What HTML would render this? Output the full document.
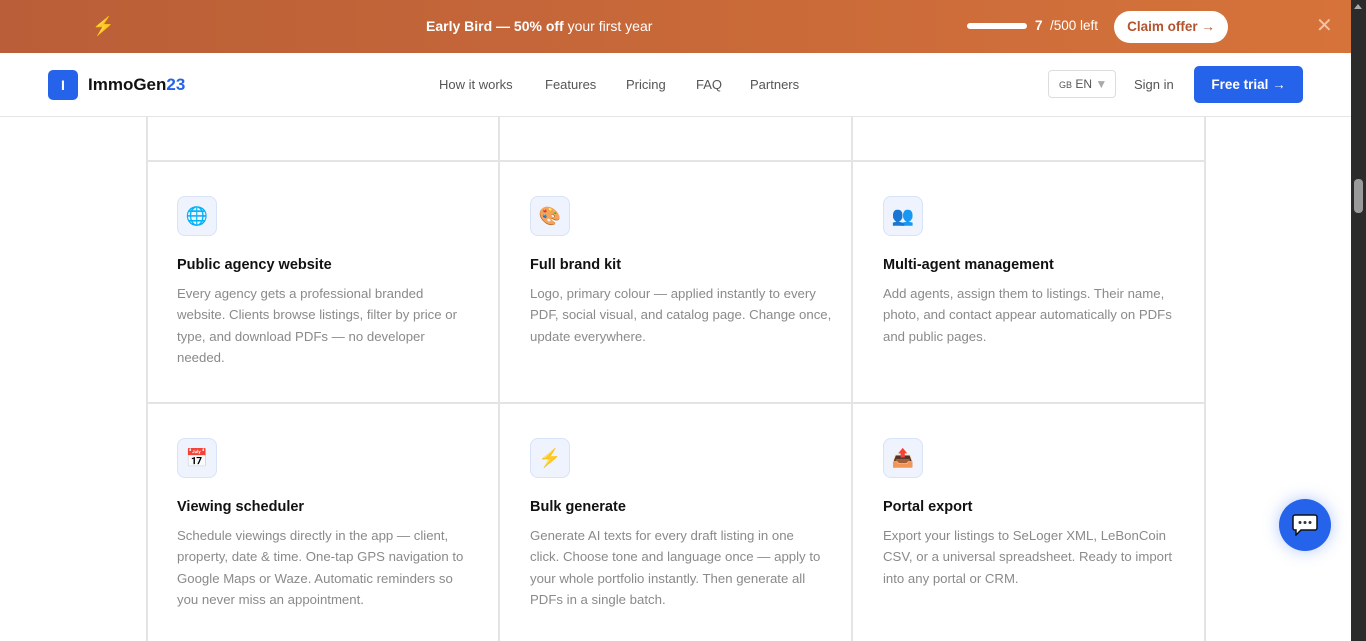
<!DOCTYPE html>
<html><head><meta charset="utf-8"><style>
*{box-sizing:border-box;margin:0;padding:0}
body{width:1366px;height:641px;overflow:hidden;font-family:"Liberation Sans",sans-serif;background:#fff;position:relative}
.banner{position:absolute;left:0;top:0;width:1351px;height:53px;background:linear-gradient(90deg,#b95e38,#d6733a);color:#fff}
.nav{position:absolute;left:0;top:53px;width:1351px;height:64px;background:#fff;border-bottom:1px solid #e6e6e6;z-index:2}
.sb{position:absolute;left:1351px;top:0;width:15px;height:641px;background:#2b2b2b}
.thumb{position:absolute;left:1354px;top:179px;width:9px;height:34px;background:#9a9a9a;border-radius:4px}
.vl{position:absolute;width:2px;background:#e4e4e4;top:117px;height:524px}
.hl{position:absolute;height:2px;background:#e4e4e4;left:147px;width:1059px}
.cell{position:absolute;width:320px}
.ic{width:40px;height:40px;border:1px solid #d9e3f7;background:#eef3fe;border-radius:8px;display:flex;align-items:center;justify-content:center;font-size:18px}
.cell h3{font-size:14.5px;font-weight:bold;color:#111;margin-top:21px;height:20px}
.cell p{font-size:13.2px;color:#8a8a8a;line-height:21.3px;margin-top:6px;white-space:nowrap}
.navl{position:absolute;top:24px;font-size:13px;color:#555}
</style></head><body>
<div class="banner">
 <div style="position:absolute;left:92px;top:16px;font-size:18px;line-height:20px;color:#f5c518">⚡</div>
 <div style="position:absolute;left:426px;top:18px;font-size:14px"><b>Early Bird — 50% off</b> your first year</div>
 <div style="position:absolute;left:967px;top:23px;width:60px;height:6px;background:#fff;border-radius:3px"></div>
 <div style="position:absolute;left:1035px;top:18px;font-size:13.5px"><b>7</b>&nbsp; /500 left</div>
 <div style="position:absolute;left:1114px;top:11px;width:114px;height:32px;background:#fff;border-radius:16px;color:#b2552f;font-size:13.5px;font-weight:bold;text-align:center;line-height:32px">Claim offer →</div>
 <div style="position:absolute;left:1316px;top:13px;font-size:20px;color:#f0c4a8">✕</div>
</div>
<div class="nav">
 <div style="position:absolute;left:48px;top:17px;width:30px;height:30px;background:#2563eb;border-radius:5px;color:#fff;font-weight:bold;text-align:center;line-height:30px;font-size:14px">I</div>
 <div style="position:absolute;left:88px;top:22px;font-size:17px;font-weight:bold;color:#111">ImmoGen<span style="color:#2563eb">23</span></div>
 <div class="navl" style="left:439px">How it works</div>
 <div class="navl" style="left:545px">Features</div>
 <div class="navl" style="left:626px">Pricing</div>
 <div class="navl" style="left:696px">FAQ</div>
 <div class="navl" style="left:750px">Partners</div>
 <div style="position:absolute;left:1048px;top:17px;width:68px;height:28px;border:1px solid #ddd;border-radius:4px;font-size:12px;color:#555;line-height:26px;padding-left:10px"><span style="font-size:9px">GB</span> EN <span style="color:#aaa">▼</span></div>
 <div class="navl" style="left:1134px">Sign in</div>
 <div style="position:absolute;left:1194px;top:13px;width:109px;height:37px;background:#2563eb;border-radius:5px;color:#fff;font-weight:bold;font-size:13.5px;text-align:center;line-height:37px">Free trial →</div>
</div>
<div class="vl" style="left:146px"></div><div class="vl" style="left:498px"></div><div class="vl" style="left:851px"></div><div class="vl" style="left:1204px"></div>
<div class="hl" style="top:160px"></div><div class="hl" style="top:402px"></div>

<div class="cell" style="left:177px;top:196px"><div class="ic">🌐</div><h3>Public agency website</h3><p>Every agency gets a professional branded<br>website. Clients browse listings, filter by price or<br>type, and download PDFs — no developer<br>needed.</p></div>
<div class="cell" style="left:530px;top:196px"><div class="ic">🎨</div><h3>Full brand kit</h3><p>Logo, primary colour — applied instantly to every<br>PDF, social visual, and catalog page. Change once,<br>update everywhere.</p></div>
<div class="cell" style="left:883px;top:196px"><div class="ic">👥</div><h3>Multi-agent management</h3><p>Add agents, assign them to listings. Their name,<br>photo, and contact appear automatically on PDFs<br>and public pages.</p></div>
<div class="cell" style="left:177px;top:438px"><div class="ic">📅</div><h3>Viewing scheduler</h3><p>Schedule viewings directly in the app — client,<br>property, date &amp; time. One-tap GPS navigation to<br>Google Maps or Waze. Automatic reminders so<br>you never miss an appointment.</p></div>
<div class="cell" style="left:530px;top:438px"><div class="ic">⚡</div><h3>Bulk generate</h3><p>Generate AI texts for every draft listing in one<br>click. Choose tone and language once — apply to<br>your whole portfolio instantly. Then generate all<br>PDFs in a single batch.</p></div>
<div class="cell" style="left:883px;top:438px"><div class="ic">📤</div><h3>Portal export</h3><p>Export your listings to SeLoger XML, LeBonCoin<br>CSV, or a universal spreadsheet. Ready to import<br>into any portal or CRM.</p></div>

<div style="position:absolute;left:1279px;top:499px;width:52px;height:52px;border-radius:50%;background:#2563eb;box-shadow:0 0 16px rgba(37,99,235,.35);display:flex;align-items:center;justify-content:center">
 <svg width="26" height="22" viewBox="0 0 26 22"><path d="M3 1h20a2 2 0 0 1 2 2v11a2 2 0 0 1-2 2H9l-5 5v-5H3a2 2 0 0 1-2-2V3a2 2 0 0 1 2-2z" fill="#fff" stroke="#111" stroke-width="1.5"/><circle cx="8" cy="8.5" r="1.5" fill="#333"/><circle cx="13" cy="8.5" r="1.5" fill="#333"/><circle cx="18" cy="8.5" r="1.5" fill="#333"/></svg>
</div>
<div class="sb"></div><div class="thumb"></div>
<div style="position:absolute;left:1354px;top:4px;width:0;height:0;border-left:4px solid transparent;border-right:4px solid transparent;border-bottom:5px solid #aaa"></div>
</body></html>
